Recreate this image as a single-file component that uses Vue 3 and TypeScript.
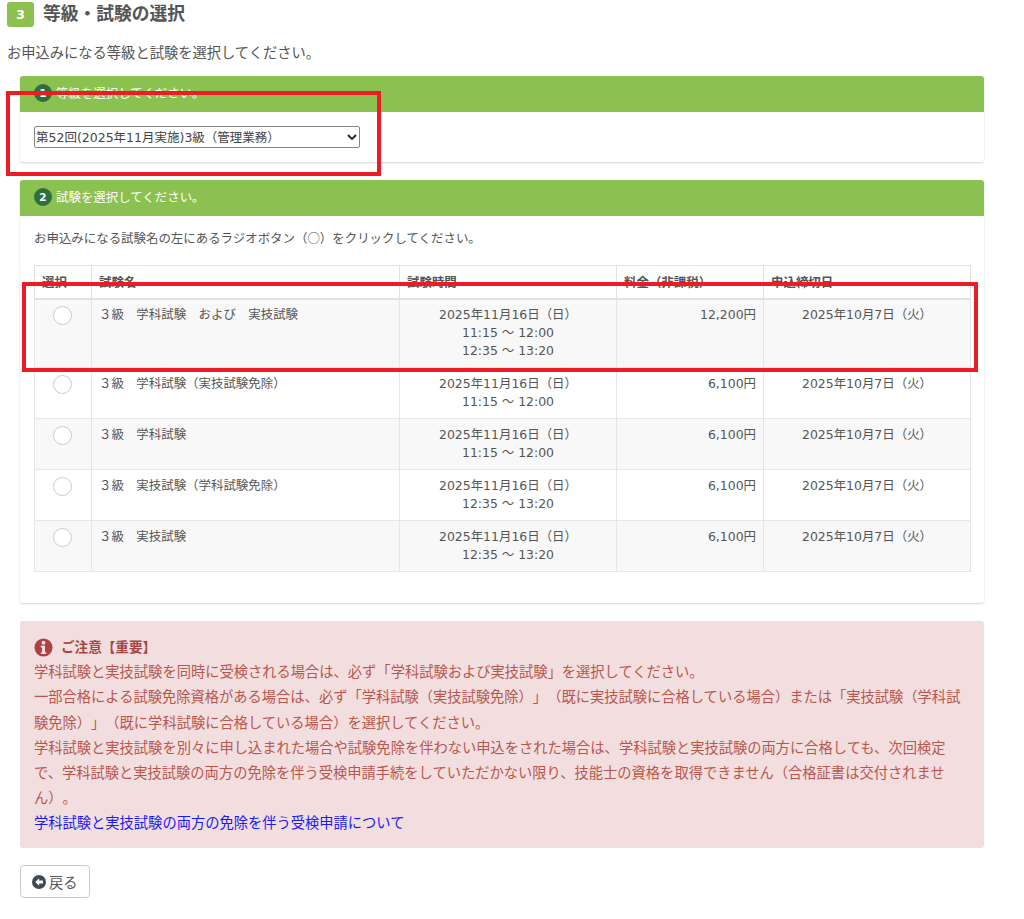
<script setup lang="ts">
interface Exam { name: string; times: string[]; fee: string }
const exams: Exam[] = [
  { name: '３級　学科試験　および　実技試験', times: ['11:15 ～ 12:00', '12:35 ～ 13:20'], fee: '12,200円' },
  { name: '３級　学科試験（実技試験免除）', times: ['11:15 ～ 12:00'], fee: '6,100円' },
  { name: '３級　学科試験', times: ['11:15 ～ 12:00'], fee: '6,100円' },
  { name: '３級　実技試験（学科試験免除）', times: ['12:35 ～ 13:20'], fee: '6,100円' },
  { name: '３級　実技試験', times: ['12:35 ～ 13:20'], fee: '6,100円' }
]
</script>

<template>
  <div class="page">
    <div class="heading">
      <span class="step">3</span>
      <h2>等級・試験の選択</h2>
    </div>
    <p class="lead">お申込みになる等級と試験を選択してください。</p>

    <section class="panel first">
      <header class="panel-head"><span class="num">1</span>等級を選択してください。</header>
      <div class="panel-body select-body">
        <div class="select-wrap">
          <select class="grade">
            <option>第52回(2025年11月実施)3級（管理業務）</option>
          </select>
          <svg class="chevron" viewBox="0 0 10 6" width="10" height="6" aria-hidden="true">
            <path d="M1 1l4 4 4-4" fill="none" stroke="#222" stroke-width="1.8" />
          </svg>
        </div>
      </div>
    </section>

    <section class="panel second">
      <header class="panel-head"><span class="num">2</span>試験を選択してください。</header>
      <div class="panel-body table-body">
        <p class="hint">お申込みになる試験名の左にあるラジオボタン（○）をクリックしてください。</p>
        <table>
          <colgroup>
            <col class="c1" /><col class="c2" /><col class="c3" /><col class="c4" /><col class="c5" />
          </colgroup>
          <thead>
            <tr>
              <th>選択</th><th>試験名</th><th>試験時間</th><th>料金（非課税）</th><th>申込締切日</th>
            </tr>
          </thead>
          <tbody>
            <tr v-for="exam in exams" :key="exam.name">
              <td class="radio-cell"><input type="radio" name="exam" class="radio" /></td>
              <td class="name">{{ exam.name }}</td>
              <td class="center">
                <div>2025年11月16日（日）</div>
                <div v-for="t in exam.times" :key="t">{{ t }}</div>
              </td>
              <td class="fee">{{ exam.fee }}</td>
              <td class="center">2025年10月7日（火）</td>
            </tr>
          </tbody>
        </table>
      </div>
    </section>

    <section class="alert">
      <div class="alert-title">
        <svg class="info" viewBox="0 0 20 20" width="19" height="19" aria-hidden="true">
          <circle cx="10" cy="10" r="9.5" fill="#a94442" />
          <circle cx="10" cy="5" r="2" fill="#f2dede" />
          <path d="M7.2 8.2h4.4v6.9h1.3v1.7H7.2v-1.7h1.3v-5.2H7.2z" fill="#f2dede" />
        </svg>
        <strong>ご注意【重要】</strong>
      </div>
      <div>学科試験と実技試験を同時に受検される場合は、必ず「学科試験および実技試験」を選択してください。</div>
      <div>一部合格による試験免除資格がある場合は、必ず「学科試験（実技試験免除）」（既に実技試験に合格している場合）または「実技試験（学科試験免除）」（既に学科試験に合格している場合）を選択してください。</div>
      <div>学科試験と実技試験を別々に申し込まれた場合や試験免除を伴わない申込をされた場合は、学科試験と実技試験の両方に合格しても、次回検定で、学科試験と実技試験の両方の免除を伴う受検申請手続をしていただかない限り、技能士の資格を取得できません（合格証書は交付されません）。</div>
      <a href="#">学科試験と実技試験の両方の免除を伴う受検申請について</a>
    </section>

    <button class="back" type="button">
      <svg viewBox="0 0 16 16" width="14" height="14" aria-hidden="true">
        <circle cx="8" cy="8" r="8" fill="#3f4a54" />
        <path d="M8.2 3.6 3.8 8l4.4 4.4V9.6h4.3V6.4H8.2z" fill="#fff" />
      </svg>
      戻る
    </button>

    <div class="mark mark-a"></div>
    <div class="mark mark-b"></div>
  </div>
</template>

<style>
html, body { margin: 0; background: #fff; }
</style>

<style scoped>
.page {
  position: relative;
  box-sizing: border-box;
  width: 1024px;
  height: 919px;
  overflow: hidden;
  padding: 1px 40px 0 7px;
  font-family: "DejaVu Sans", "Noto Sans CJK JP", sans-serif;
  text-spacing-trim: space-all;
  font-feature-settings: "chws" 0, "palt" 0;
  color: #555;
  font-size: 14.27px;
}
.heading { display: flex; align-items: flex-start; gap: 9px; height: 27px; }
.step {
  width: 27px; height: 25px; margin-top: 1px; border-radius: 3px; background: #8bc150; color: #fff;
  font-weight: 700; font-size: 13px; line-height: 25px; text-align: center;
}
h2 { margin: 2px 0 0; font-size: 17.75px; line-height: 22px; font-weight: 700; color: #555; }
.lead { margin: 15px 0 0; line-height: 20px; }
.panel {
  margin-left: 13px; width: 964px; background: #fff; border-radius: 3px;
  box-shadow: 0 1px 2px rgba(0, 0, 0, .18);
}
.first { margin-top: 13px; height: 86px; }
.second { margin-top: 18px; height: 423px; }
.panel-head {
  display: flex; align-items: center; height: 36px; padding: 0 0 2px 14px; box-sizing: border-box; gap: 4px;
  background: #8bc150; color: #fff; font-size: 12.45px; border-radius: 3px 3px 0 0;
}
.num {
  width: 18px; height: 18px; border-radius: 50%; background: #2f6f3e; color: #fff;
  font-size: 10.5px; font-weight: 700; line-height: 18px; text-align: center;
}
.select-body { padding: 14px; }
.select-wrap { position: relative; width: 326px; height: 22px; }
.grade {
  appearance: none; display: block; width: 326px; height: 22px; padding: 0 0 0 1px; box-sizing: border-box;
  font: 12.5px "DejaVu Sans", "Noto Sans CJK JP", sans-serif; color: #444; background: #fff;
  text-spacing-trim: space-all;
  border: 1px solid #858585; border-radius: 2px;
}
.chevron { position: absolute; right: 3px; top: 8px; pointer-events: none; }
.table-body { padding: 12px 14px 0; }
.hint {
  margin: 0 0 19px; font-size: 12.45px; line-height: 18px;
  font-family: "Noto Sans CJK JP", sans-serif; position: relative; top: 1px;
}
table { width: 936px; border-collapse: collapse; table-layout: fixed; font-size: 12.45px; }
.c1 { width: 57px; } .c2 { width: 308px; } .c3 { width: 217px; } .c4 { width: 147px; } .c5 { width: 207px; }
th {
  height: 32px; padding: 0 0 0 7px; text-align: left; font-weight: 700; font-size: 12.45px;
  border: 1px solid #e2e2e2; border-bottom-width: 2px; color: #555;
}
td {
  padding: 7px 7px 7px; vertical-align: top; line-height: 18px;
  border: 1px solid #e6e6e6;
}
tbody tr:first-child td { padding-top: 6px; }
tbody tr:nth-child(odd) { background: #f8f8f8; }
td.radio-cell, tbody tr:first-child td.radio-cell { padding: 0; text-align: center; }
.radio {
  appearance: none; display: block; box-sizing: border-box; width: 19px; height: 19px;
  margin: 7px auto 0 18px; border: 1px solid #c9ccd4; border-radius: 50%; background: #fff;
}
tbody tr:first-child .radio { margin-top: 6px; }
.center { text-align: center; }
.fee { text-align: right; padding-right: 7px; }
.alert {
  box-sizing: border-box; margin: 18px 0 0 13px; width: 964px; height: 227px;
  padding: 14px 14px 0; background: #f2dede; color: #b9564f; border-radius: 3px;
  font-size: 14.27px; line-height: 25.2px;
}
.alert-title { display: flex; align-items: center; gap: 8px; color: #a94442; }
.alert-title strong { font-size: 13.6px; }
.alert a { color: #1a1aff; text-decoration: none; }
.back {
  display: flex; align-items: center; gap: 3px; box-sizing: border-box;
  margin: 17px 0 0 13px; width: 70px; height: 33px; padding: 0 0 0 11px;
  background: #fff; border: 1px solid #c8ccd2; border-radius: 4px;
  font: 14.27px "DejaVu Sans", "Noto Sans CJK JP", sans-serif; color: #555;
}
.mark { position: absolute; box-sizing: border-box; border: 4px solid #ed1c24; }
.mark-a { left: 6px; top: 91px; width: 375px; height: 85px; }
.mark-b { left: 22px; top: 282px; width: 956px; height: 90px; }
</style>
